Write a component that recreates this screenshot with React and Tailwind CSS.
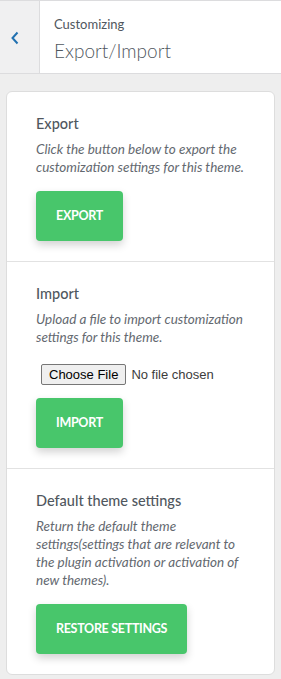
import React from 'react';

const SECTIONS = [
  {
    id: 'export',
    title: 'Export',
    desc: 'Click the button below to export the customization settings for this theme.',
    button: 'EXPORT',
  },
  {
    id: 'import',
    title: 'Import',
    desc: 'Upload a file to import customization settings for this theme.',
    button: 'IMPORT',
    file: true,
  },
  {
    id: 'default',
    title: 'Default theme settings',
    desc: 'Return the default theme settings(settings that are relevant to the plugin activation or activation of new themes).',
    button: 'RESTORE SETTINGS',
  },
];

export default function App() {
  return (
    <div className="w-[281px] h-[679px] bg-[#eeeeee] font-['Lato',sans-serif] text-[#50575e] overflow-hidden">
      {/* Header */}
      <header className="flex h-[74px] bg-white border-t border-b border-[#dcdcde]">
        <button className="w-[40px] shrink-0 bg-[#f0f0f1] border-r border-[#dcdcde] flex items-center pl-[10px] pt-[2px] text-[#2271b1]">
          <svg width="10" height="14" viewBox="0 0 10 14" fill="none">
            <path d="M7.5 1.5 L2.5 7 L7.5 12.5" stroke="currentColor" strokeWidth="2" />
          </svg>
        </button>
        <div className="pl-[14px] pt-[14px]">
          <div className="text-[13px] leading-[18px]">Customizing</div>
          <div className="text-[19px] font-light leading-[28px] mt-[4px]">Export/Import</div>
        </div>
      </header>

      {/* Card */}
      <div className="mx-[6px] mt-[17px] bg-white border border-[#dddddd] rounded-[6px]">
        {SECTIONS.map((s, i) => (
          <section
            key={s.id}
            className={`pl-[29px] pr-[30px] pt-[22px] pb-[20px] ${i > 0 ? 'border-t border-[#e2e2e2]' : ''}`}
          >
            <h3 className="text-[14.5px] font-medium leading-[20px] text-[#50575e]">{s.title}</h3>
            <p className="mt-[6px] text-[13.5px] italic leading-[18px] text-[#646970]">{s.desc}</p>
            {s.file && (
              <div className="mt-[18px] ml-[5px] flex items-center gap-[5px] font-['Liberation_Sans',sans-serif] text-[13px]">
                <span className="px-[7px] h-[21px] leading-[19px] bg-[#efefef] border border-[#767676] rounded-[2px] text-black">
                  Choose File
                </span>
                <span className="text-[#3c3c3c]">No file chosen</span>
              </div>
            )}
            <button
              className={`${s.file ? 'mt-[13px]' : 'mt-[15px]'} h-[50px] px-[20px] bg-[#48c66b] rounded-[4px] text-white text-[12.5px] font-bold tracking-[-0.3px] shadow-[0_4px_8px_rgba(0,0,0,0.18)]`}
            >
              {s.button}
            </button>
          </section>
        ))}
      </div>
    </div>
  );
}
